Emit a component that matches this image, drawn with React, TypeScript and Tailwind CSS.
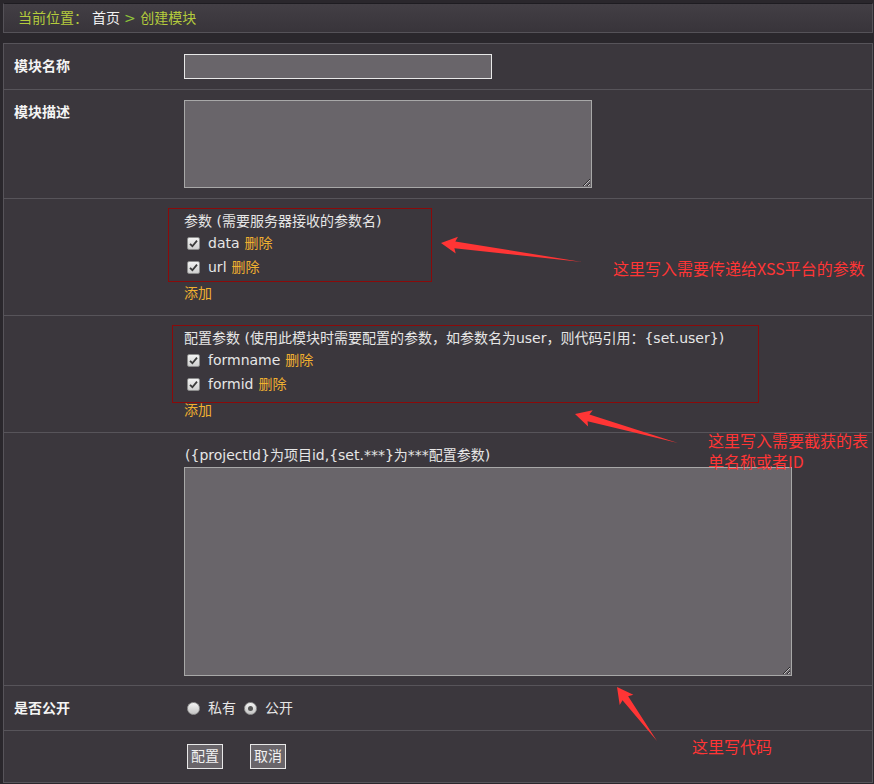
import React from 'react';

const RED = '#ff3535';

function Arrow({ tip, tail, head = 16, wing = 8.5, neck = 3.5 }: { tip: [number, number]; tail: [number, number]; head?: number; wing?: number; neck?: number }) {
    const dx = tail[0] - tip[0];
    const dy = tail[1] - tip[1];
    const len = Math.hypot(dx, dy);
    const ux = dx / len;
    const uy = dy / len;
    const px = -uy;
    const py = ux;
    const bx = tip[0] + ux * head;
    const by = tip[1] + uy * head;
    const pts = [
        [tip[0], tip[1]],
        [bx + px * wing, by + py * wing],
        [bx + ux * -2 + px * neck, by + uy * -2 + py * neck],
        [tail[0], tail[1]],
        [bx + ux * -2 - px * neck, by + uy * -2 - py * neck],
        [bx - px * wing, by - py * wing],
    ];
    return <polygon points={pts.map((p) => p.join(',')).join(' ')} fill={RED} />;
}

function Check() {
    return (
        <span className="w-[13px] h-[13px] border border-[#8d8d8d] rounded-[2px] bg-gradient-to-b from-[#f2f2f2] to-[#cfcfcf] flex items-center justify-center">
            <svg width="9" height="9" viewBox="0 0 9 9">
                <path d="M1 4.8 L3.4 7.2 L8 1.6" stroke="#3a3a3a" strokeWidth="1.8" fill="none" />
            </svg>
        </span>
    );
}

function Radio({ on }: { on?: boolean }) {
    return (
        <span className="w-[13px] h-[13px] rounded-full border border-[#9a9a9a] bg-gradient-to-b from-[#f4f4f4] to-[#c4c4c4] flex items-center justify-center">
            {on && <span className="w-[5px] h-[5px] rounded-full bg-[#555]" />}
        </span>
    );
}

function ParamItem({ name }: { name: string }) {
    return (
        <div className="h-[24px] flex items-center pl-[3px]">
            <Check />
            <span className="ml-[8px] text-[#e6e6e6]">{name}</span>
            <span className="ml-[5px] text-[#f0b030]">删除</span>
        </div>
    );
}

export default function App() {
    return (
        <div className="relative w-[874px] h-[784px] overflow-hidden bg-[#2a272c] pt-[3px] pl-[3px] font-['DejaVu_Sans','Noto_Sans_CJK_SC',sans-serif] text-[14px] text-[#e6e6e6]">

            {/* breadcrumb */}
            <div className="w-[870px] h-[30px] border border-[#555258] border-t-[#1e1c21] bg-gradient-to-b from-[#433f45] to-[#38343a] flex items-center pl-[14px] text-[#b4cb3c]">
                <span>当前位置：</span>
                <span className="ml-[4px] text-[#f2f2f2]">首页</span>
                <span className="ml-[4px]"><span className="text-[#8fc43a]">&gt;</span> 创建模块</span>
            </div>

            {/* form panel */}
            <div className="mt-[10px] w-[870px] border border-[#57545a] bg-[#3b373d]">
                <div className="h-[46px] grid grid-cols-[180px_1fr] items-center border-b border-[#57545a]">
                    <div className="pl-[10px] font-bold text-[#f4f4f4]">模块名称</div>
                    <div>
                        <input className="block w-[308px] h-[25px] border border-[#e8e8e8] bg-[#69656a] outline-none" />
                    </div>
                </div>

                <div className="h-[109px] grid grid-cols-[180px_1fr] border-b border-[#57545a]">
                    <div className="pl-[10px] pt-[12px] leading-[20px] font-bold text-[#f4f4f4]">模块描述</div>
                    <div className="pt-[10px]">
                        <textarea className="block w-[408px] h-[88px] border border-[#a8a8a8] bg-[#69656a] outline-none" />
                    </div>
                </div>

                <div className="h-[117px] grid grid-cols-[180px_1fr] border-b border-[#57545a]">
                    <div />
                    <div className="pt-[12px] leading-[20px]">
                        <div className="h-[20px] flex items-center">参数 (需要服务器接收的参数名)</div>
                        <ParamItem name="data" />
                        <ParamItem name="url" />
                        <div className="h-[28px] flex items-center text-[#f0b030]">添加</div>
                    </div>
                </div>

                <div className="h-[117px] grid grid-cols-[180px_1fr] border-b border-[#57545a]">
                    <div />
                    <div className="pt-[12px] leading-[20px]">
                        <div className="h-[20px] flex items-center">配置参数 (使用此模块时需要配置的参数，如参数名为user，则代码引用：{'{set.user}'})</div>
                        <ParamItem name="formname" />
                        <ParamItem name="formid" />
                        <div className="h-[28px] flex items-center text-[#f0b030]">添加</div>
                    </div>
                </div>

                <div className="h-[253px] grid grid-cols-[180px_1fr] border-b border-[#57545a]">
                    <div />
                    <div className="pt-[12px]">
                        <div className="h-[20px] flex items-center pl-[1px]">({'{projectId}'}为项目id,{'{set.***}'}为***配置参数)</div>
                        <textarea className="mt-[2px] block w-[608px] h-[209px] border border-[#a8a8a8] bg-[#69656a] outline-none" />
                    </div>
                </div>

                <div className="h-[45px] grid grid-cols-[180px_1fr] items-center border-b border-[#57545a]">
                    <div className="pl-[10px] font-bold text-[#f4f4f4]">是否公开</div>
                    <div className="flex items-center pl-[3px]">
                        <Radio />
                        <span className="ml-[8px]">私有</span>
                        <span className="ml-[8px]"><Radio on /></span>
                        <span className="ml-[8px]">公开</span>
                    </div>
                </div>

                <div className="h-[51px] grid grid-cols-[180px_1fr] items-center">
                    <div />
                    <div className="flex items-center gap-[27px] pl-[3px]">
                        <button className="h-[25px] px-[3px] border border-[#e8e8e8] bg-[#69656a] text-[#f2f2f2]">配置</button>
                        <button className="h-[25px] px-[3px] border border-[#e8e8e8] bg-[#69656a] text-[#f2f2f2]">取消</button>
                    </div>
                </div>
            </div>

            {/* annotations drawn over the page */}
            <svg className="absolute inset-0 pointer-events-none" width="874" height="784">
                <rect x="168.5" y="208.5" width="263" height="73" fill="none" stroke="#8a0a0a" />
                <rect x="172.5" y="325.5" width="586" height="77" fill="none" stroke="#8a0a0a" />
                <Arrow tip={[441, 243]} tail={[582, 262]} />
                <Arrow tip={[575, 414]} tail={[678, 443]} />
                <Arrow tip={[617, 687]} tail={[657, 741]} />
            </svg>
            <div className="absolute left-[613px] top-[258px] text-[16px] leading-[21px] text-[#ff3535] font-['Noto_Sans_CJK_SC',sans-serif]">这里写入需要传递给XSS平台的参数</div>
            <div className="absolute left-[708px] top-[430px] w-[164px] text-[16px] leading-[21px] text-[#ff3535] font-['Noto_Sans_CJK_SC',sans-serif]">这里写入需要截获的表单名称或者ID</div>
            <div className="absolute left-[692px] top-[736px] text-[16px] leading-[21px] text-[#ff3535] font-['Noto_Sans_CJK_SC',sans-serif]">这里写代码</div>
        </div>
    );
}
